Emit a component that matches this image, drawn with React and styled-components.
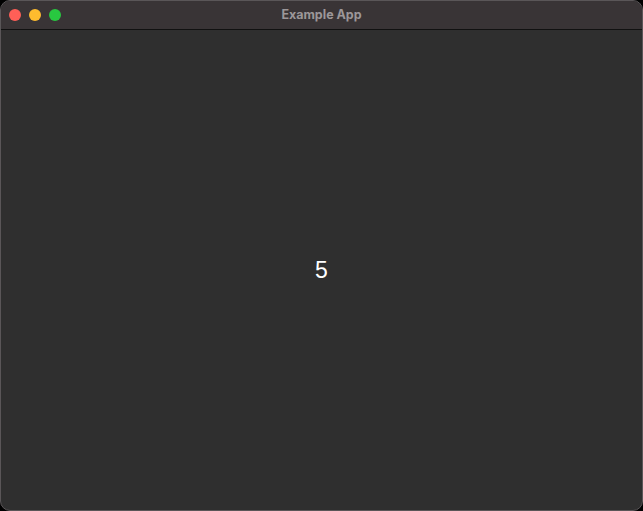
import React from "react";
import styled, { createGlobalStyle } from "styled-components";

const GlobalStyle = createGlobalStyle`
  html, body {
    margin: 0;
    padding: 0;
    background: #000;
  }
  #root {
    width: 643px;
    height: 511px;
  }
`;

const Window = styled.div`
  box-sizing: border-box;
  width: 643px;
  height: 511px;
  display: flex;
  flex-direction: column;
  border-radius: 10px;
  border: 1px solid #5a5658;
  overflow: hidden;
  background: #2f2f2f;
  font-family: Inter, "Liberation Sans", sans-serif;
`;

const TitleBar = styled.div`
  position: relative;
  height: 28px;
  flex-shrink: 0;
  display: flex;
  align-items: center;
  justify-content: center;
  background: #393436;
  border-bottom: 1px solid #111;
`;

const Lights = styled.div`
  position: absolute;
  left: 8px;
  top: 8px;
  display: flex;
  gap: 8px;
`;

const Light = styled.span`
  width: 12px;
  height: 12px;
  border-radius: 50%;
  background: ${(p) => p.color};
`;

const Title = styled.div`
  font-size: 12.5px;
  font-weight: 700;
  color: #9c9799;
  margin-bottom: 1px;
`;

const Content = styled.div`
  flex: 1;
  display: flex;
  align-items: center;
  justify-content: center;
  color: #fff;
  font-size: 23px;
  font-family: "Liberation Sans", Arial, sans-serif;
`;

const App = () => {
  return (
    <>
      <GlobalStyle />
      <Window>
        <TitleBar>
          <Lights>
            <Light color="#ff5f57" />
            <Light color="#febc2e" />
            <Light color="#28c840" />
          </Lights>
          <Title>Example App</Title>
        </TitleBar>
        <Content>5</Content>
      </Window>
    </>
  );
};

export default App;
